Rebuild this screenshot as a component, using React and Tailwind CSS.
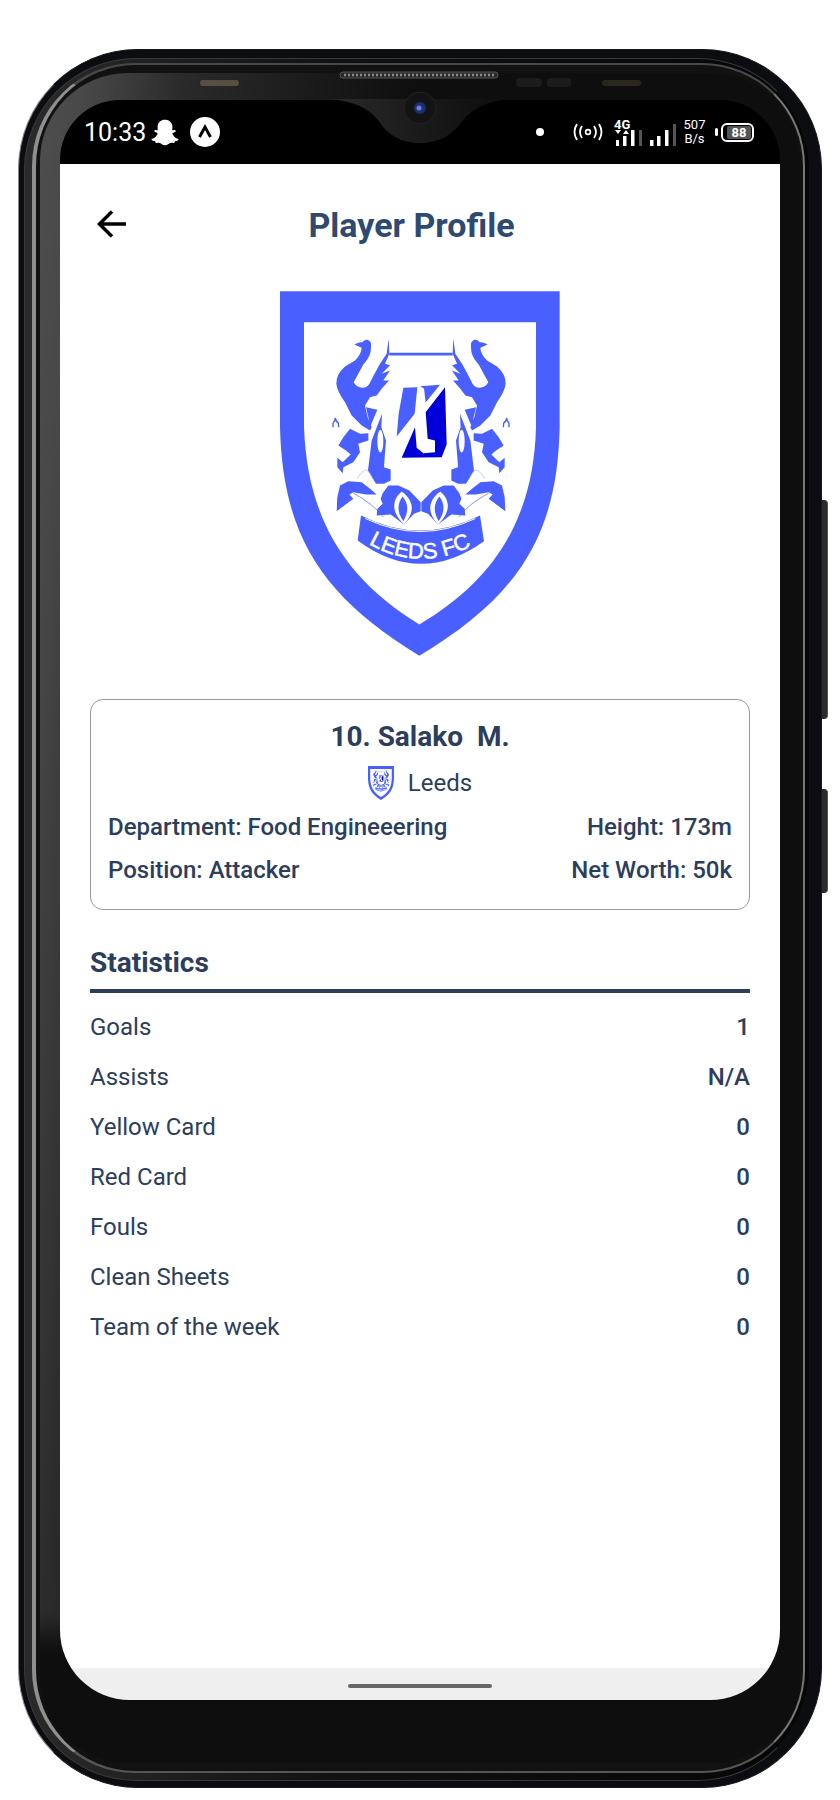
import React, { useId } from "react";
import { FaSnapchatGhost } from "react-icons/fa";

const stats = [
  { label: "Goals", value: "1" },
  { label: "Assists", value: "N/A" },
  { label: "Yellow Card", value: "0" },
  { label: "Red Card", value: "0" },
  { label: "Fouls", value: "0" },
  { label: "Clean Sheets", value: "0" },
  { label: "Team of the week", value: "0" },
];

const Griffin = () => (
  <g fill="#4a5fff">
    {/* head, neck and wing */}
    <path d="M283 222 Q300 214 306 216 Q314 206 322 208 Q336 212 333 230 Q334 256 310 282 L281 335 Q290 352 312 352 Q326 348 332 332 L346 305 L360 280 L380 250 L386 204 L388 250 L375 280 L390 284 L365 310 L390 300 L370 330 L387 330 L365 355 L350 375 L330 380 L315 405 L323 440 L335 470 L330 480 L305 465 L275 435 L255 395 Q232 365 229 340 Q228 312 255 288 L285 270 Q304 252 305 232 Z" />
    {/* chest */}
    <path d="M318 410 L352 418 L330 470 L325 440 Z" />
    {/* body and legs */}
    <path d="M270 475 L300 490 L325 488 L325 510 L295 520 L300 545 L280 575 L250 590 L248 608 L232 590 L232 562 L248 575 L272 552 L258 540 L235 525 L250 500 Z" />
    {/* column beside the shield */}
    <path d="M366 430 L364 470 L378 510 L374 560 L372 590 L392 597 L392 630 L372 640 L348 640 L324 600 L335 510 Z" />
    <ellipse cx="361" cy="512" rx="9" ry="34" fill="#fff" />
    {/* scroll end */}
    <path d="M240 645 L265 632 L305 635 L330 655 L350 672 L318 672 L280 665 L268 672 L280 685 L240 715 L230 722 L232 680 Z" />
    {/* mass under the arch */}
    <path d="M368 668 L385 645 L415 645 L448 660 L482 695 L482 722 L462 730 L432 762 L392 732 L350 735 L352 715 L368 700 L362 685 Z" />
    <path fill="#fff" d="M425 663 C462 690 466 725 432 762 C394 725 394 690 425 663 Z" />
    <path d="M428 678 C446 700 446 725 430 752 C411 725 411 700 428 678 Z" />
    {/* small fork */}
    <path fill="none" stroke="#4a5fff" strokeWidth="4" d="M219 470 L219 458 Q226 452 226 442 Q226 452 235 458 L236 470" />
    {/* thin lines */}
    <path fill="none" stroke="#a9b4ff" strokeWidth="2" d="M292 625 Q305 600 320 598 Q332 608 338 625" />
    <path fill="none" stroke="#4a5fff" strokeWidth="2" d="M280 668 Q340 700 370 740" />
  </g>
);

const Crest = ({ className }) => {
  const id = useId();
  return (
    <svg viewBox="60 62 840 1094" className={className}>
      <path fill="#4a5fff" d="M60 62 L899 62 L899 470 C892 800 770 980 478 1156 C190 980 68 800 60 470 Z" />
      <path fill="#fff" d="M132 155 L828 155 L828 470 C820 750 700 930 478 1062 C262 930 142 750 132 470 Z" />
      <Griffin />
      <g transform="matrix(-1 0 0 1 966 0)">
        <Griffin />
      </g>
      <path fill="#4a5fff" d="M388 247 L578 247 L578 255 L388 255 Z" />
      <path fill="#4a5fff" d="M430 352 L472 350 L464 430 L410 498 L416 430 Z M480 347 L540 343 L497 396 L492 354 Z" />
      <path fill="#0000d8" d="M555 350 L560 522 L545 560 L425 562 L465 470 L470 532 L490 548 L525 545 L525 510 L503 505 L497 425 Z" />
      <path fill="#4a5fff" d="M303 735 Q480 825 660 735 L672 812 Q480 949 293 810 Z" />
      <path fill="none" stroke="#fff" strokeWidth="3" d="M316 744 Q480 822 646 744" />
      <path id={id} fill="none" d="M326 820 Q480 908 640 824" />
      <text fontFamily="'Liberation Sans', Arial, sans-serif" fontSize="66" fill="#fff" stroke="#fff" strokeWidth="1.5">
        <textPath href={`#${id}`} startOffset="0">LEEDS FC</textPath>
      </text>
    </svg>
  );
};

const BezelDetails = () => (
  <svg viewBox="40 60 760 110" className="absolute left-0 top-[-13px] z-10 h-[110px] w-[760px]">
    <defs>
      <linearGradient id="notchFill" x1="0" x2="1" y1="0" y2="0">
        <stop offset="0" stopColor="#2b2b2b" />
        <stop offset="0.5" stopColor="#1a1a1a" />
        <stop offset="1" stopColor="#0c0c0c" />
      </linearGradient>
    </defs>
    <path fill="url(#notchFill)" d="M325 99 Q362 100 378 120 Q392 143 420 143 Q448 143 463 120 Q480 100 515 99 Z" />
    <rect x="340" y="72" width="158" height="6" rx="3" fill="#2a2a2a" stroke="#555" strokeWidth="1" />
    <line x1="344" y1="75" x2="495" y2="75" stroke="#8a8a8a" strokeWidth="2.4" strokeDasharray="2 2" />
    <rect x="200" y="80" width="39" height="6" rx="3" fill="#574f40" />
    <rect x="602" y="80" width="39" height="6" rx="3" fill="#2a281c" />
    <rect x="516" y="78" width="26" height="9" rx="4" fill="#1c1c1c" />
    <rect x="547" y="78" width="24" height="9" rx="4" fill="#1c1c1c" />
    <circle cx="420" cy="108" r="16" fill="#141414" stroke="#232323" />
    <circle cx="420" cy="108" r="6" fill="#1c2f6e" />
    <circle cx="419" cy="108" r="2.5" fill="#6a7fe0" />
  </svg>
);

const StatusBar = () => (
  <div className="flex h-[64px] items-center rounded-t-[60px] bg-black pl-[24px] pr-[26px] text-white">
    <span className="text-[25px] leading-none">10:33</span>
    <FaSnapchatGhost className="ml-[5px] h-[27px] w-[28px]" />
    <div className="ml-[11px] flex h-[30px] w-[30px] items-center justify-center rounded-full bg-white">
      <svg viewBox="0 0 20 20" className="h-[20px] w-[20px]">
        <path d="M4.5 15 L10 5 L15.5 15" fill="none" stroke="#000" strokeWidth="3" />
      </svg>
    </div>
    <div className="ml-auto mr-[29px] h-[8px] w-[8px] rounded-full bg-white"></div>
    <svg viewBox="0 0 30 18" className="mr-[11px] h-[18px] w-[30px]">
      <circle cx="15" cy="9" r="2.4" fill="none" stroke="#fff" strokeWidth="1.6" />
      <path d="M9 3 Q5 9 9 15 M21 3 Q25 9 21 15 M4 1 Q-1 9 4 17 M26 1 Q31 9 26 17" fill="none" stroke="#fff" strokeWidth="1.8" />
    </svg>
    <div className="mr-[7px] flex w-[29px] flex-col">
      <span className="h-[11px] text-[13px] font-bold leading-[11px]">4G</span>
      <svg viewBox="616 128 29 16" className="h-[16px] w-[29px]">
        <path d="M617 128 L623 128 L620 132 Z M625 132 L631 132 L628 128 Z" fill="#fff" />
        <path d="M618 138 h3 v6 h-3 Z M625 134 h3.5 v10 h-3.5 Z M633 128 h3.5 v16 h-3.5 Z" fill="#fff" />
        <rect x="641" y="128" width="3" height="16" fill="#555" />
      </svg>
    </div>
    <svg viewBox="652 122 26 22" className="mr-[7px] mt-[5px] h-[22px] w-[26px]">
      <path d="M652 138 h3.5 v6 h-3.5 Z M659 134 h3.5 v10 h-3.5 Z M667 128 h3.5 v16 h-3.5 Z" fill="#fff" />
      <rect x="675" y="122" width="3" height="22" fill="#555" />
    </svg>
    <div className="mr-[9px] flex w-[23px] flex-col items-center text-[13px] leading-[14px]">
      <span>507</span>
      <span>B/s</span>
    </div>
    <div className="mr-[3px] h-[8px] w-[3px] rounded-sm bg-white"></div>
    <div className="flex h-[19px] w-[33px] items-center justify-end rounded-[6px] border-2 border-white p-[1px]">
      <div className="flex h-full w-[24px] items-center justify-center rounded-[2px] bg-[#555] text-[13px] font-bold leading-none">88</div>
    </div>
  </div>
);

const App = () => {
  return (
    <div className="h-[1800px] w-[840px] overflow-hidden bg-white pl-[18px] pt-[49px] font-['Roboto',sans-serif]">
      {/* phone body */}
      <div className="relative h-[1739px] w-[804px] rounded-[120px] border border-[#17181c] border-l-[#888] bg-[#0c0d11] pb-[6px] pl-[5px] pr-[11px] pt-[8px]">
        <div className="absolute right-[-7px] top-[450px] h-[219px] w-[6px] rounded-r-sm border-r border-[#555] bg-[#2b2b2b]"></div>
        <div className="absolute right-[-7px] top-[739px] h-[104px] w-[6px] rounded-r-sm border-r border-[#555] bg-[#2b2b2b]"></div>
        <div className="h-full rounded-[112px] border border-[#3a3a3a] border-r-[#111] bg-[linear-gradient(90deg,#2a2a2a_0%,#111_40%,#060606_100%)] pb-[7px] pl-[7px] pr-[4px] pt-[4px]">
          <div className="h-full rounded-[103px] border-b-2 border-l-4 border-r-2 border-t-2 border-b-[#555] border-l-[#8f8f8f] border-r-[#777] border-t-[#484848] bg-[#111] pb-[8px] pl-[4px] pr-[3px] pt-[8px]">
            {/* screen bezel */}
            <div className="relative h-full rounded-[88px] bg-[linear-gradient(to_top,#0e0e0e_110px,transparent_150px),linear-gradient(95deg,#4e4e4e_0,#484848_47px,#2a2a2a_143px,#0e0e0e_380px)] pl-[20px] pr-[20px] pt-[27px]">
              <BezelDetails />
              <div className="flex h-[1600px] flex-col overflow-hidden rounded-b-[70px]">
                <StatusBar />
                <div className="flex-1 bg-white px-[30px] text-[#2c3e5c]">
                  {/* header */}
                  <div className="relative mt-[29px] flex h-[64px] items-center justify-center">
                    <svg viewBox="0 0 30 28" className="absolute left-[7px] top-[17px] h-[28px] w-[30px]">
                      <path d="M29 14 H3 M15 1.5 L2.5 14 L15 26.5" fill="none" stroke="#000" strokeWidth="3.5" />
                    </svg>
                    <h1 className="ml-[-17px] text-[34px] font-bold leading-none text-[#2f4a70]">Player Profile</h1>
                  </div>
                  <div className="mt-[34px] flex justify-center">
                    <Crest className="h-[365px] w-[280px]" />
                  </div>
                  {/* player card */}
                  <div className="mt-[43px] flex h-[211px] flex-col rounded-[13px] border border-[#999] px-[17px] pt-[20px]">
                    <div className="whitespace-pre text-center text-[28px] font-bold leading-[34px]">10. Salako  M.</div>
                    <div className="mt-[12px] flex items-center justify-center">
                      <Crest className="h-[34px] w-[26px]" />
                      <span className="ml-[14px] text-[24px] leading-[34px]">Leeds</span>
                    </div>
                    <div className="mt-[11px] flex justify-between text-[24px] font-medium leading-[32px]">
                      <span>Department: Food Engineeering</span>
                      <span>Height: 173m</span>
                    </div>
                    <div className="mt-[11px] flex justify-between text-[24px] font-medium leading-[32px]">
                      <span>Position: Attacker</span>
                      <span>Net Worth: 50k</span>
                    </div>
                  </div>
                  {/* statistics */}
                  <div className="mt-[35px] border-b-[4px] border-[#2c3e5c] pb-[8px] text-[28px] font-bold leading-[36px]">Statistics</div>
                  <div className="mt-[9px] flex flex-col">
                    {stats.map((s) => (
                      <div key={s.label} className="flex h-[50px] items-center justify-between text-[24px]">
                        <span>{s.label}</span>
                        <span className="font-medium">{s.value}</span>
                      </div>
                    ))}
                  </div>
                </div>
                <div className="flex h-[32px] items-center justify-center bg-[#efefef]">
                  <div className="mt-[3px] h-[4px] w-[144px] rounded-full bg-[#666]"></div>
                </div>
              </div>
            </div>
          </div>
        </div>
      </div>
    </div>
  );
};

export default App;
